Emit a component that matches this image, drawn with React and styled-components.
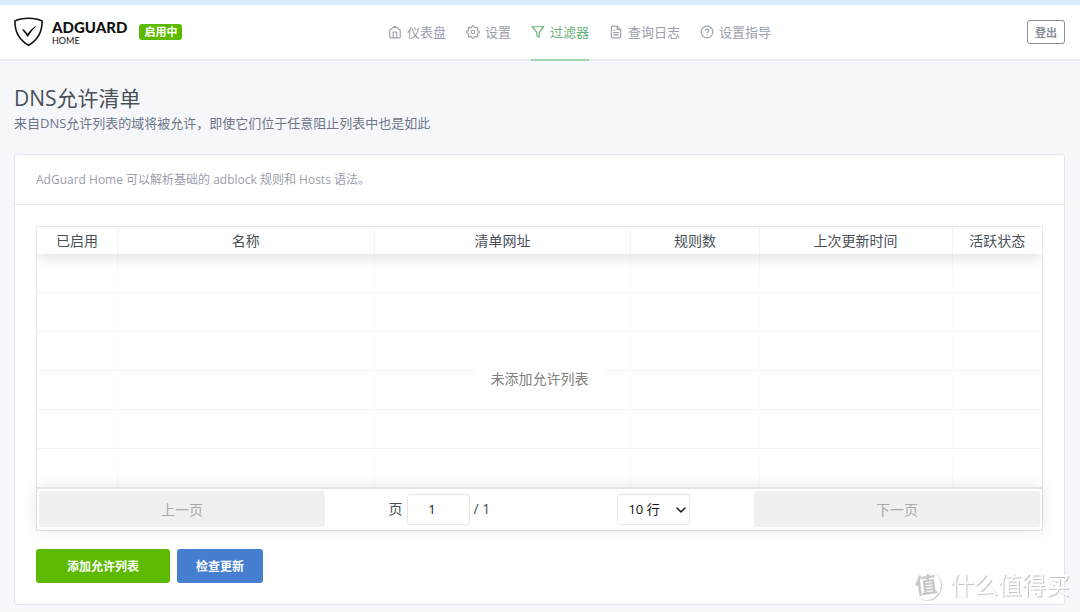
import React, { useState } from "react";
import styled, { createGlobalStyle } from "styled-components";

const GlobalStyle = createGlobalStyle`
  * {
    box-sizing: border-box;
  }
  body {
    margin: 0;
    background: #f5f7fb;
    color: #495057;
    font-family: "Open Sans", "Noto Sans CJK SC", sans-serif;
    font-size: 13px;
    line-height: 20px;
  }
  button,
  input,
  select {
    font-family: inherit;
  }
`;

const Header = styled.header`
  display: grid;
  grid-template-columns: 14fr auto 11fr;
  align-items: stretch;
  height: 61px;
  padding: 0 15px 0 14px;
  background: #fff;
  border-top: 5px solid #daecfa;
  border-bottom: 2px solid #e9ecf3;
`;

const Brand = styled.a`
  display: flex;
  align-items: center;
  gap: 8px;
  color: #131313;
  text-decoration: none;
`;

const BrandName = styled.span`
  display: flex;
  flex-direction: column;
  padding-top: 2px;
  font-family: Lato, sans-serif;
  font-size: 9px;
  line-height: 12px;
`;

const BrandTitle = styled.strong`
  font-size: 15px;
  font-weight: 900;
  line-height: 16px;
`;

const Badge = styled.span`
  margin-left: 4px;
  padding: 0 5px;
  border-radius: 3px;
  background: #5eba00;
  color: #fff;
  font-size: 11px;
  font-weight: 700;
  line-height: 16px;
`;

const Nav = styled.nav`
  display: flex;
  gap: 20px;
`;

const NavLink = styled.a`
  display: flex;
  align-items: center;
  gap: 5px;
  margin-bottom: -2px;
  border-bottom: 2px solid ${(props) => (props.$active ? "#a3d4ae" : "transparent")};
  color: ${(props) => (props.$active ? "#67b279" : "#9aa0ac")};
  text-decoration: none;

  svg {
    width: 14px;
    height: 14px;
  }
`;

const LogoutButton = styled.button`
  align-self: center;
  justify-self: end;
  height: 24px;
  padding: 0 7px;
  border: 1px solid #868e96;
  border-radius: 3px;
  background: #fff;
  color: #868e96;
  font-size: 11px;
  font-weight: 700;
  cursor: pointer;
`;

const Main = styled.main`
  padding: 22px 15px 7px 14px;
`;

const Title = styled.h1`
  margin: 0;
  font-size: 21px;
  font-weight: 400;
  line-height: 30px;
`;

const Subtitle = styled.p`
  margin: 0 0 21px;
  color: #6e7687;
`;

const Card = styled.section`
  border: 1px solid #e2e6ee;
  border-radius: 3px;
  background: #fff;
`;

const CardHeader = styled.div`
  padding: 15px 21px 14px;
  border-bottom: 1px solid #e2e6ee;
  color: #9aa0ac;
  font-size: 12px;
`;

const CardBody = styled.div`
  padding: 21px;
`;

const TableBox = styled.div`
  position: relative;
  border: 1px solid #e6e6e6;
  font-size: 14px;
`;

const TableClip = styled.div`
  overflow: hidden;
`;

const Table = styled.table`
  width: 100%;
  table-layout: fixed;
  border-spacing: 0;

  thead {
    position: relative;
    box-shadow: 0 2px 15px 0 rgba(0, 0, 0, 0.15);
  }

  th {
    height: 27px;
    padding: 0;
    border-right: 1px solid #f2f2f2;
    background: #fff;
    font-weight: 400;
  }

  td {
    height: 39px;
    padding: 0;
    border-right: 1px solid #fafafa;
    border-bottom: 1px solid #f2f2f2;
  }

  th:last-child,
  td:last-child {
    border-right: 0;
  }

  tr:last-child td {
    height: 38px;
    border-bottom: 0;
  }
`;

const EmptyText = styled.div`
  position: absolute;
  top: 50%;
  left: 50%;
  transform: translate(-50%, -50%);
  padding: 0 16px;
  background: #fff;
  color: #808080;
  white-space: nowrap;
`;

const Pagination = styled.div`
  display: grid;
  grid-template-columns: 2fr 3fr 2fr;
  align-items: center;
  padding: 2px 2px 3px;
  border-top: 2px solid #e4e4e4;
  background: #fff;
  box-shadow: 0 0 15px 0 rgba(0, 0, 0, 0.1);
`;

const PageButton = styled.button`
  height: 36px;
  border: 0;
  border-radius: 3px;
  background: #f0f0f0;
  color: #aaa;
  font-size: 14px;
`;

const PageCenter = styled.div`
  display: flex;
  align-items: center;
  justify-content: space-around;
`;

const PageInfo = styled.label`
  display: flex;
  align-items: center;
  gap: 4px;
`;

const PageInput = styled.input`
  width: 63px;
  height: 31px;
  padding: 0 12px 0 0;
  border: 1px solid #e6e6e6;
  border-radius: 3px;
  color: #111;
  font-size: 13px;
  text-align: center;
`;

const SelectBox = styled.div`
  position: relative;
  display: flex;

  svg {
    position: absolute;
    top: 10px;
    right: 3px;
    width: 12px;
    height: 12px;
    color: #111;
    pointer-events: none;
  }
`;

const SizeSelect = styled.select`
  appearance: none;
  width: 73px;
  height: 31px;
  padding: 0 0 0 10px;
  border: 1px solid #e6e6e6;
  border-radius: 3px;
  background: #fff;
  color: #111;
  font-size: 13px;
`;

const Actions = styled.div`
  display: flex;
  gap: 7px;
  margin-top: 18px;
`;

const ActionButton = styled.button`
  height: 34px;
  padding: 0 ${(props) => (props.$wide ? "31px" : "19px")};
  border: 0;
  border-radius: 3px;
  background: ${(props) => (props.$wide ? "#5eba00" : "#467fcf")};
  color: #fff;
  font-size: 12px;
  font-weight: 700;
  cursor: pointer;
`;

const Watermark = styled.div`
  position: fixed;
  right: 10px;
  bottom: 11px;
  display: flex;
  align-items: center;
  gap: 9px;
  color: #fff;
  font-size: 24px;
  line-height: 32px;
  text-shadow: 1px 1px 0 #c4c4c4;
  pointer-events: none;
`;

const WatermarkSeal = styled.span`
  width: 30px;
  height: 30px;
  border-radius: 50%;
  box-shadow: 1px 1px 0 #d0d0d0;
  color: #c8c8c8;
  font-size: 22px;
  font-weight: 700;
  line-height: 28px;
  text-align: center;
  text-shadow: none;
  transform: rotate(-8deg);
`;

const Icon = ({ children }) => (
  <svg
    viewBox="0 0 24 24"
    fill="none"
    stroke="currentColor"
    strokeWidth="2"
    strokeLinecap="round"
    strokeLinejoin="round"
    aria-hidden="true"
  >
    {children}
  </svg>
);

const navItems = [
  {
    label: "仪表盘",
    icon: (
      <>
        <path d="M3 9l9-7 9 7v11a2 2 0 0 1-2 2H5a2 2 0 0 1-2-2z" />
        <path d="M9 22V12h6v10" />
      </>
    ),
  },
  {
    label: "设置",
    icon: (
      <>
        <circle cx="12" cy="12" r="3" />
        <path d="M19.4 15a1.65 1.65 0 0 0 .33 1.82l.06.06a2 2 0 0 1-2.83 2.83l-.06-.06a1.65 1.65 0 0 0-2.8 1.17V21a2 2 0 0 1-4 0v-.09A1.65 1.65 0 0 0 9 19.4a1.65 1.65 0 0 0-1.82.33l-.06.06a2 2 0 0 1-2.83-2.83l.06-.06a1.65 1.65 0 0 0-1.17-2.8H3a2 2 0 0 1 0-4h.09A1.65 1.65 0 0 0 4.6 9a1.65 1.65 0 0 0-.33-1.82l-.06-.06a2 2 0 0 1 2.83-2.83l.06.06a1.65 1.65 0 0 0 1.82.33H9a1.65 1.65 0 0 0 1-1.51V3a2 2 0 0 1 4 0v.09a1.65 1.65 0 0 0 2.82 1.17l.06-.06a2 2 0 0 1 2.83 2.83l-.06.06a1.65 1.65 0 0 0-.33 1.82V9a1.65 1.65 0 0 0 1.51 1H21a2 2 0 0 1 0 4h-.09a1.65 1.65 0 0 0-1.51 1z" />
      </>
    ),
  },
  {
    label: "过滤器",
    active: true,
    icon: <path d="M22 3H2l8 9.46V19l4 2v-8.54L22 3z" />,
  },
  {
    label: "查询日志",
    icon: (
      <>
        <path d="M14 2H6a2 2 0 0 0-2 2v16a2 2 0 0 0 2 2h12a2 2 0 0 0 2-2V8z" />
        <path d="M14 2v6h6M16 13H8M16 17H8M10 9H8" />
      </>
    ),
  },
  {
    label: "设置指导",
    icon: (
      <>
        <circle cx="12" cy="12" r="10" />
        <path d="M9.09 9a3 3 0 0 1 5.83 1c0 2-3 3-3 3M12 17h.01" />
      </>
    ),
  },
];

const columns = [
  { label: "已启用", width: "8.05%" },
  { label: "名称", width: "25.55%" },
  { label: "清单网址", width: "25.55%" },
  { label: "规则数", width: "12.75%" },
  { label: "上次更新时间", width: "19.2%" },
  { label: "活跃状态", width: "8.9%" },
];

const rows = [1, 2, 3, 4, 5, 6];

const Logo = () => (
  <svg width="30" height="30" viewBox="0 0 30 30" fill="none" aria-hidden="true">
    <path
      d="M14.500 1.200C9.800 1.200 4.800 2 .9 4c0 4.500-.500 16 13.600 24.300C28.600 20 28.100 8.500 28.100 4 24.200 2 19.200 1.200 14.500 1.200z"
      stroke="#131313"
      strokeWidth="1.600"
    />
    <path
      d="M8 12.700c1.200-.600 2.300 0 3 1l2.600 3.100C16 13.600 18.600 10.700 21.800 8.700l.500.300C19.400 12.300 16.500 15.600 13.700 20 12.200 17.500 10 14.800 8 12.700z"
      fill="#131313"
    />
  </svg>
);

const App = () => {
  const [page, setPage] = useState("1");

  return (
    <>
      <GlobalStyle />
      <Header>
        <Brand href="#">
          <Logo />
          <BrandName>
            <BrandTitle>ADGUARD</BrandTitle>
            HOME
          </BrandName>
          <Badge>启用中</Badge>
        </Brand>
        <Nav>
          {navItems.map((item) => (
            <NavLink href="#" key={item.label} $active={item.active}>
              <Icon>{item.icon}</Icon>
              {item.label}
            </NavLink>
          ))}
        </Nav>
        <LogoutButton>登出</LogoutButton>
      </Header>
      <Main>
        <Title>DNS允许清单</Title>
        <Subtitle>
          来自DNS允许列表的域将被允许，即使它们位于任意阻止列表中也是如此
        </Subtitle>
        <Card>
          <CardHeader>
            AdGuard Home 可以解析基础的 adblock 规则和 Hosts 语法。
          </CardHeader>
          <CardBody>
            <TableBox>
              <TableClip>
                <Table>
                  <colgroup>
                    {columns.map((column) => (
                      <col key={column.label} style={{ width: column.width }} />
                    ))}
                  </colgroup>
                  <thead>
                    <tr>
                      {columns.map((column) => (
                        <th key={column.label}>{column.label}</th>
                      ))}
                    </tr>
                  </thead>
                  <tbody>
                    {rows.map((row) => (
                      <tr key={row}>
                        {columns.map((column) => (
                          <td key={column.label} />
                        ))}
                      </tr>
                    ))}
                  </tbody>
                </Table>
              </TableClip>
              <Pagination>
                <PageButton disabled>上一页</PageButton>
                <PageCenter>
                  <PageInfo>
                    页
                    <PageInput
                      value={page}
                      onChange={(event) => setPage(event.target.value)}
                    />
                    / 1
                  </PageInfo>
                  <SelectBox>
                    <SizeSelect aria-label="行" defaultValue="10">
                      <option value="10">10 行</option>
                    </SizeSelect>
                    <Icon>
                      <path d="M4 8l8 8 8-8" strokeWidth="3" />
                    </Icon>
                  </SelectBox>
                </PageCenter>
                <PageButton disabled>下一页</PageButton>
              </Pagination>
              <EmptyText>未添加允许列表</EmptyText>
            </TableBox>
            <Actions>
              <ActionButton $wide>添加允许列表</ActionButton>
              <ActionButton>检查更新</ActionButton>
            </Actions>
          </CardBody>
        </Card>
      </Main>
      <Watermark>
        <WatermarkSeal>值</WatermarkSeal>
        什么值得买
      </Watermark>
    </>
  );
};

export default App;
